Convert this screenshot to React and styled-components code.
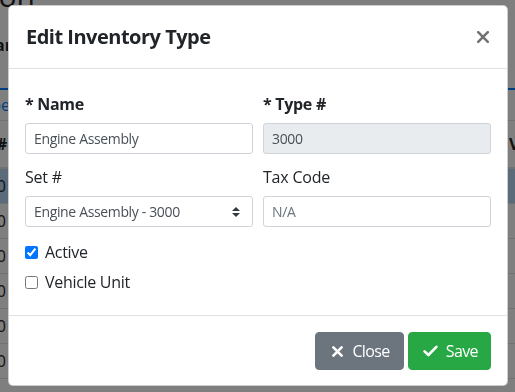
import React from "react";
import styled, { createGlobalStyle } from "styled-components";

const Global = createGlobalStyle`
  html, body { margin: 0; padding: 0; }
  body {
    font-family: "Open Sans", "Noto Sans", sans-serif;
    color: #212529;
    background: #fff;
    overflow: hidden;
  }
`;

/* ---------- page behind the modal ---------- */
const Page = styled.div`
  width: 515px;
  height: 392px;
  overflow: hidden;
  background: #fff;
  display: flex;
  flex-direction: column;
`;

const Strip = styled.div`
  display: flex;
  align-items: ${(p) => p.$align || "center"};
  flex: 0 0 ${(p) => p.$h}px;
  min-height: 0;
  border-bottom: ${(p) => p.$border || "none"};
  background: ${(p) => p.$bg || "transparent"};
  box-sizing: border-box;
`;

const Tail = styled.div`
  flex: 0 0 ${(p) => p.$w}px;
  min-width: 0;
  display: flex;
  justify-content: flex-end;
  white-space: nowrap;
  font-size: ${(p) => p.$size || 16}px;
  line-height: ${(p) => p.$lh || "24px"};
  font-weight: ${(p) => (p.$bold ? 700 : 400)};
  color: ${(p) => p.$color || "#212529"};
`;

const Fill = styled.div`
  flex: 1;
`;

const Head = styled.div`
  flex: 0 0 6px;
  overflow: hidden;
  white-space: nowrap;
  font-weight: 700;
  font-size: 16px;
`;

/* ---------- modal ---------- */
const Backdrop = styled.div`
  position: fixed;
  inset: 0;
  background: rgba(0, 0, 0, 0.5);
`;

const Dialog = styled.div`
  position: fixed;
  top: 5px;
  left: 8px;
  width: 500px;
  box-sizing: border-box;
  background: #fff;
  border: 1px solid rgba(0, 0, 0, 0.2);
  border-radius: 5px;
  display: flex;
  flex-direction: column;
`;

const Header = styled.div`
  display: flex;
  align-items: center;
  justify-content: space-between;
  padding: 16px 17px;
  border-bottom: 1px solid #dee2e6;
`;

const Title = styled.h5`
  margin: 0;
  font-size: 20px;
  line-height: 30px;
  font-weight: 700;
  letter-spacing: -0.5px;
  color: #212529;
`;

const CloseX = styled.button`
  border: 0;
  background: transparent;
  padding: 0;
  margin-right: 1px;
  display: flex;
  cursor: pointer;
`;

const Body = styled.div`
  padding: 23px 16px 21px 16px;
  display: flex;
  flex-direction: column;
`;

const Grid = styled.div`
  display: grid;
  grid-template-columns: 1fr 1fr;
  column-gap: 10px;
  row-gap: 11px;
`;

const Field = styled.div`
  display: flex;
  flex-direction: column;
`;

const Label = styled.label`
  font-size: 16px;
  line-height: 24px;
  margin-bottom: 7px;
  font-weight: ${(p) => (p.$req ? 700 : 400)};
  letter-spacing: ${(p) => (p.$req ? "-0.3px" : "-0.2px")};
  color: #212529;
`;

const Input = styled.input`
  box-sizing: border-box;
  height: 31px;
  width: 100%;
  padding: 4px 8px;
  font-family: inherit;
  font-size: 14px;
  letter-spacing: -0.35px;
  color: #495057;
  background: ${(p) => (p.disabled ? "#e9ecef" : "#fff")};
  border: 1px solid #ced4da;
  border-radius: 3px;
  outline: none;
  &::placeholder { color: #6c757d; opacity: 1; }
`;

const SelectWrap = styled.div`
  position: relative;
`;

const Select = styled.select`
  box-sizing: border-box;
  height: 31px;
  width: 100%;
  padding: 4px 28px 4px 8px;
  font-family: inherit;
  font-size: 14px;
  letter-spacing: -0.35px;
  color: #495057;
  background: #fff;
  border: 1px solid #ced4da;
  border-radius: 3px;
  appearance: none;
  outline: none;
`;

const Caret = styled.svg`
  position: absolute;
  right: 13px;
  top: 50%;
  transform: translateY(-50%);
  pointer-events: none;
`;

const Checks = styled.div`
  margin-top: 13px;
  display: flex;
  flex-direction: column;
  gap: 6px;
`;

const CheckRow = styled.label`
  display: flex;
  align-items: center;
  gap: 7px;
  font-size: 16px;
  line-height: 24px;
  letter-spacing: -0.3px;
  color: #212529;
`;

const Box = styled.input`
  margin: 0;
  width: 13px;
  height: 13px;
  accent-color: #0075ff;
`;

const Footer = styled.div`
  display: flex;
  justify-content: flex-end;
  gap: 4px;
  padding: 16px 16px 15px;
  border-top: 1px solid #dee2e6;
`;

const Button = styled.button`
  box-sizing: border-box;
  height: 38px;
  display: flex;
  align-items: center;
  gap: ${(p) => p.$gap}px;
  padding: 0 ${(p) => p.$pr}px 0 ${(p) => p.$pl}px;
  border: 1px solid ${(p) => p.$bg};
  border-radius: 4px;
  background: ${(p) => p.$bg};
  color: #fff;
  font-family: inherit;
  font-size: 16px;
  letter-spacing: -0.6px;
  cursor: pointer;
`;

const rows = [0, 1, 2, 3, 4, 5];

export default function App() {
  return (
    <>
      <Global />
      <Page>
        <Strip $h={6} $align="flex-end">
          <Tail $w={35} $size={30} $lh="20px">Configuration</Tail>
        </Strip>
        <Strip $h={78}>
          <Tail $w={12} $bold>Clear</Tail>
        </Strip>
        <Strip $h={6} $border="2px solid #007bff" />
        <Strip $h={31} $border="1px solid #dee2e6">
          <Tail $w={10} $color="#007bff">Type</Tail>
        </Strip>
        <Strip $h={48} $border="2px solid #dee2e6">
          <Tail $w={7} $bold>#</Tail>
          <Fill />
          <Head>Vehicle</Head>
        </Strip>
        {rows.map((r) => (
          <Strip
            key={r}
            $h={35}
            $border="1px solid #dee2e6"
            $bg={r === 0 ? "#b8d6f5" : "transparent"}
          >
            <Tail $w={6}>3000</Tail>
          </Strip>
        ))}
      </Page>

      <Backdrop />
      <Dialog role="dialog">
        <Header>
          <Title>Edit Inventory Type</Title>
          <CloseX aria-label="Close">
            <svg width="12" height="12" viewBox="0 0 12 12">
              <path
                d="M1.2 1.2 L10.8 10.8 M10.8 1.2 L1.2 10.8"
                stroke="#737373"
                strokeWidth="2.5"
                strokeLinecap="round"
              />
            </svg>
          </CloseX>
        </Header>

        <Body>
          <Grid>
            <Field>
              <Label $req>* Name</Label>
              <Input defaultValue="Engine Assembly" />
            </Field>
            <Field>
              <Label $req>* Type #</Label>
              <Input defaultValue="3000" disabled />
            </Field>
            <Field>
              <Label>Set #</Label>
              <SelectWrap>
                <Select defaultValue="3000">
                  <option value="3000">Engine Assembly - 3000</option>
                </Select>
                <Caret width="8" height="10" viewBox="0 0 4 5">
                  <path d="M2 0L0 2h4zm0 5L0 3h4z" fill="#343a40" />
                </Caret>
              </SelectWrap>
            </Field>
            <Field>
              <Label>Tax Code</Label>
              <Input placeholder="N/A" />
            </Field>
          </Grid>
          <Checks>
            <CheckRow>
              <Box type="checkbox" defaultChecked />
              Active
            </CheckRow>
            <CheckRow>
              <Box type="checkbox" />
              Vehicle Unit
            </CheckRow>
          </Checks>
        </Body>

        <Footer>
          <Button $bg="#6c757d" $pl={16} $pr={13} $gap={9}>
            <svg width="11" height="11" viewBox="0 0 11 11">
              <path
                d="M1.4 1.4 L9.6 9.6 M9.6 1.4 L1.4 9.6"
                stroke="#fff"
                strokeWidth="2.6"
                strokeLinecap="round"
              />
            </svg>
            Close
          </Button>
          <Button $bg="#28a745" $pl={14} $pr={12} $gap={8}>
            <svg width="15" height="12" viewBox="0 0 15 12">
              <path
                d="M1.6 6.4 L5.4 10 L13.4 1.8"
                stroke="#fff"
                strokeWidth="2.6"
                fill="none"
                strokeLinecap="round"
                strokeLinejoin="round"
              />
            </svg>
            Save
          </Button>
        </Footer>
      </Dialog>
    </>
  );
}
